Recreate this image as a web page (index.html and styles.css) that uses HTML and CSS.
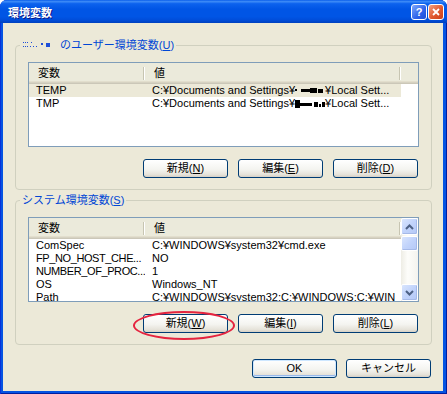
FILE: index.html
```html
<!DOCTYPE html>
<html lang="ja">

<head>
    <meta charset="UTF-8">
    <meta name="viewport" content="width=device-width, initial-scale=1.0">
    <title>環境変数</title>
    <link rel="stylesheet" href="styles.css">
</head>

<body>
    <div class="window">
        <div class="titlebar">
            <span class="title">環境変数</span>
            <div class="caption-buttons">
                <span class="cap-btn help">?</span>
                <span class="cap-btn close">
                    <svg width="8" height="8" viewBox="0 0 8 8">
                        <path d="M1 1 L7 7 M7 1 L1 7" stroke="#fff" stroke-width="1.8" fill="none" />
                    </svg>
                </span>
            </div>
        </div>

        <div class="client">
            <!-- user variables -->
            <fieldset class="group">
                <legend>
                    <svg class="masked" width="28" height="8" viewBox="0 0 28 8">
                        <rect x="1" y="1" width="1" height="1" />
                        <rect x="3" y="1" width="1" height="1" />
                        <rect x="5" y="1" width="1" height="1" />
                        <rect x="9" y="1" width="1" height="1" />
                        <rect x="1" y="5" width="1" height="1" />
                        <rect x="3" y="5" width="1" height="1" />
                        <rect x="5" y="5" width="1" height="1" />
                        <rect x="8" y="5" width="1" height="1" />
                        <rect x="11" y="5" width="1" height="1" />
                        <rect x="14" y="5" width="1" height="1" />
                        <rect x="19" y="2" width="2" height="2" />
                        <rect x="24" y="2" width="4" height="4" />
                    </svg>
                    のユーザー環境変数(<u>U</u>)
                </legend>
                <div class="list">
                    <div class="list-body">
                        <div class="list-head">
                            <div class="col name">変数</div>
                            <div class="col value">値</div>
                        </div>
                        <div class="row selected">
                            <div class="col name">TEMP</div>
                            <div class="col value">C:¥Documents and Settings¥<svg class="redact" width="30" height="9" viewBox="0 0 30 9">
                                    <rect x="0" y="3" width="2" height="2" />
                                    <rect x="6" y="3" width="9" height="3" />
                                    <rect x="15" y="2" width="7" height="5" />
                                    <rect x="23" y="3" width="5" height="4" />
                                </svg>¥Local Sett...</div>
                        </div>
                        <div class="row">
                            <div class="col name">TMP</div>
                            <div class="col value">C:¥Documents and Settings¥<svg class="redact" width="30" height="9" viewBox="0 0 30 9">
                                    <rect x="0" y="1" width="5" height="8" />
                                    <rect x="5" y="4" width="12" height="3" />
                                    <rect x="19" y="3" width="4" height="5" />
                                    <rect x="24" y="5" width="2" height="3" />
                                    <rect x="27" y="3" width="3" height="5" />
                                </svg>¥Local Sett...</div>
                        </div>
                    </div>
                </div>
                <div class="btn-row">
                    <button class="btn">新規(<u>N</u>)</button>
                    <button class="btn">編集(<u>E</u>)</button>
                    <button class="btn">削除(<u>D</u>)</button>
                </div>
            </fieldset>

            <!-- system variables -->
            <fieldset class="group group-system">
                <legend>システム環境変数(<u>S</u>)</legend>
                <div class="list">
                    <div class="list-body">
                        <div class="list-head">
                            <div class="col name">変数</div>
                            <div class="col value">値</div>
                        </div>
                        <div class="row">
                            <div class="col name">ComSpec</div>
                            <div class="col value">C:¥WINDOWS¥system32¥cmd.exe</div>
                        </div>
                        <div class="row">
                            <div class="col name tight">FP_NO_HOST_CHE...</div>
                            <div class="col value">NO</div>
                        </div>
                        <div class="row">
                            <div class="col name tight">NUMBER_OF_PROC...</div>
                            <div class="col value">1</div>
                        </div>
                        <div class="row">
                            <div class="col name">OS</div>
                            <div class="col value">Windows_NT</div>
                        </div>
                        <div class="row">
                            <div class="col name">Path</div>
                            <div class="col value">C:¥WINDOWS¥system32;C:¥WINDOWS;C:¥WIN</div>
                        </div>
                    </div>
                    <div class="scrollbar">
                        <div class="sb-btn">
                            <svg width="9" height="6" viewBox="0 0 9 6">
                                <path d="M1 5 L4.5 1.5 L8 5" stroke="#4D6185" stroke-width="2" fill="none" />
                            </svg>
                        </div>
                        <div class="sb-thumb"></div>
                        <div class="sb-track"></div>
                        <div class="sb-btn">
                            <svg width="9" height="6" viewBox="0 0 9 6">
                                <path d="M1 1 L4.5 4.5 L8 1" stroke="#4D6185" stroke-width="2" fill="none" />
                            </svg>
                        </div>
                    </div>
                </div>
                <div class="btn-row">
                    <button class="btn">新規(<u>W</u>)</button>
                    <button class="btn">編集(<u>I</u>)</button>
                    <button class="btn">削除(<u>L</u>)</button>
                </div>
            </fieldset>

            <div class="dialog-buttons">
                <button class="btn btn-default">OK</button>
                <button class="btn">キャンセル</button>
            </div>
        </div>

        <div class="mark"></div>
    </div>
</body>

</html>
```

FILE: styles.css
```css
body {
    margin: 0;
    background-color: #fff;
    font-family: 'Liberation Sans', 'Noto Sans CJK JP', sans-serif;
    font-size: 11px;
    color: #000;
}

.window {
    position: relative;
    width: 447px;
    height: 394px;
    display: flex;
    flex-direction: column;
    background-color: #0553E2;
    border-radius: 7px 7px 0 0;
    box-shadow: inset 1px 0 #0831D9, inset -1px 0 #001EA0, inset 0 -1px #001EA0;
}

.titlebar {
    height: 23px;
    display: flex;
    align-items: center;
    justify-content: space-between;
    padding: 0 3px 0 8px;
    border-radius: 7px 7px 0 0;
    background: linear-gradient(to bottom, #0A5EEB 0%, #3D8BF7 7%, #0C62EE 16%, #0055E5 40%, #0055E5 72%, #004CD8 88%, #0040BE 100%);
}

.title {
    color: #fff;
    font-weight: bold;
    font-size: 11px;
    text-shadow: 1px 1px #0F1889;
}

.caption-buttons {
    display: flex;
    gap: 1px;
}

.cap-btn {
    width: 16px;
    height: 16px;
    box-sizing: border-box;
    display: flex;
    align-items: center;
    justify-content: center;
    border: 1px solid #fff;
    border-radius: 3px;
    color: #fff;
    font-weight: bold;
    font-size: 11px;
}

.help {
    background: linear-gradient(135deg, #7FA8FB, #2D62EA 60%, #1F4FD8);
}

.close {
    background: linear-gradient(135deg, #F2A080, #E0582F 55%, #C8401A);
}

.client {
    flex: 1;
    margin: 0 4px 3px 3px;
    display: flex;
    flex-direction: column;
    background-color: #ECE9D8;
}

.group {
    margin: 16px 11px 0 12px;
    padding: 11px 12px 11px;
    border: 1px solid #D0D0BF;
    border-radius: 4px;
    min-width: 0;
}

.group-system {
    margin-top: 4px;
}

legend {
    margin-left: -8px;
    padding: 0 2px;
    line-height: 12px;
    color: #0046D5;
}

.masked {
    fill: #1F4FD8;
    margin-right: 7px;
    vertical-align: 0;
}

.list {
    height: 85px;
    box-sizing: border-box;
    display: flex;
    overflow: hidden;
    border: 1px solid #7F9DB9;
    background-color: #fff;
}

.list-body {
    flex: 1;
    min-width: 0;
}

.list-head {
    display: flex;
    height: 21px;
    line-height: 20px;
    background-color: #EBEADB;
    box-shadow: inset 0 -1px #CBC7B8, inset 0 -2px #D6D2C2, inset 0 -3px #E2DECD;
}

.list-head .col {
    padding-left: 9px;
    background: linear-gradient(#C7C5B2, #C7C5B2) right 1px top 4px / 1px 13px no-repeat,
        linear-gradient(#fff, #fff) right 0 top 4px / 1px 13px no-repeat;
}

.col {
    box-sizing: border-box;
    white-space: nowrap;
    overflow: hidden;
}

.name {
    width: 116px;
    padding-left: 7px;
}

.tight {
    letter-spacing: -0.4px;
}

.value {
    width: 256px;
    padding-left: 7px;
}

.row {
    display: flex;
    width: 372px;
    height: 13px;
    line-height: 13px;
}

.row.selected {
    background-color: #ECE9D8;
}

.redact {
    fill: #000;
    vertical-align: -1px;
}

.scrollbar {
    width: 17px;
    display: flex;
    flex-direction: column;
    background: linear-gradient(to right, #EEEDE5, #FDFDFA 40%, #F4F3EE);
}

.sb-btn,
.sb-thumb {
    box-sizing: border-box;
    border: 1px solid #fff;
    border-radius: 2px;
    background: linear-gradient(135deg, #D9E5FD, #C1D3FB 50%, #B4C8F6);
    box-shadow: inset -1px -1px #A5B9E8;
}

.sb-btn {
    height: 17px;
    display: flex;
    align-items: center;
    justify-content: center;
}

.sb-thumb {
    height: 15px;
    margin-top: 1px;
}

.sb-track {
    flex: 1;
}

.btn-row {
    display: flex;
    justify-content: flex-end;
    gap: 10px;
    margin-top: 12px;
    padding-right: 1px;
}

.btn {
    width: 85px;
    height: 19px;
    box-sizing: border-box;
    padding: 0;
    border: 1px solid #003C74;
    border-radius: 3px;
    background: linear-gradient(to bottom, #FFFFFF, #F4F4F0 55%, #E6E3DA 85%, #D6D0C5);
    font-family: inherit;
    font-size: 11px;
    line-height: 17px;
    color: #000;
}

.btn u {
    text-underline-offset: 1px;
}

.btn-default {
    box-shadow: inset 0 0 0 1px #CEE7FF, inset 0 -1px 0 1px #98B8EA;
}

.dialog-buttons {
    display: flex;
    justify-content: flex-end;
    gap: 9px;
    margin: 14px 12px 0 0;
}

.mark {
    position: absolute;
    left: 133px;
    top: 311px;
    width: 102px;
    height: 29px;
    box-sizing: border-box;
    border: 2px solid #E5243F;
    border-radius: 50%;
}
```
